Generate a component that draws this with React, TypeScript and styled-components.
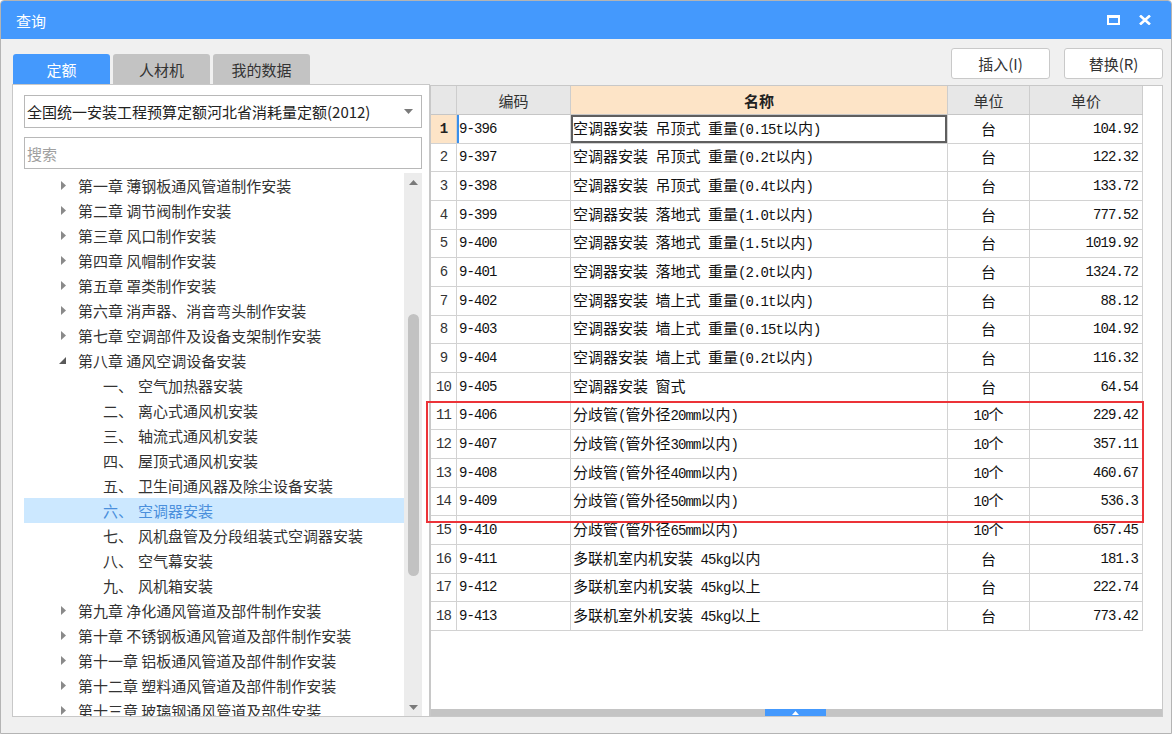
import React from 'react';
import styled, { createGlobalStyle, css } from 'styled-components';

const GlobalStyle = createGlobalStyle`
  body {
    margin: 0;
    background: #ffffff;
    font-family: 'Noto Sans CJK SC', 'Noto Sans', sans-serif;
  }
  * {
    box-sizing: border-box;
  }
`;

const BLUE = '#4499fd';
const PEACH = '#fde4c7';
const GRID = '#d2d2d2';

const Window = styled.div`
  width: 1172px;
  height: 734px;
  background: #f0f0f0;
  border: 1px solid #b4b4b4;
  border-radius: 4px 4px 0 0;
  display: flex;
  flex-direction: column;
  overflow: hidden;
`;

const TitleBar = styled.div`
  height: 38px;
  flex: none;
  background: ${BLUE};
  display: flex;
  align-items: center;
  padding: 0 10px 0 15px;
  color: #fff;
  font-size: 15px;
`;

const Title = styled.div`
  flex: 1;
  line-height: 20px;
  padding-top: 2px;
`;

const TitleButton = styled.div`
  width: 32px;
  height: 24px;
  display: flex;
  align-items: center;
  justify-content: center;
`;

const Body = styled.div`
  flex: 1;
  display: flex;
  flex-direction: column;
  padding: 0 8px 0 11px;
  position: relative;
`;

const TopRow = styled.div`
  height: 46px;
  display: flex;
  align-items: flex-start;
  justify-content: space-between;
`;

const Tabs = styled.div`
  align-self: flex-end;
  display: flex;
  gap: 3px;
  padding-left: 1px;
`;

const Tab = styled.div<{ $active?: boolean }>`
  width: 97px;
  height: 31px;
  border-radius: 3px 3px 0 0;
  display: flex;
  align-items: center;
  justify-content: center;
  font-size: 15px;
  line-height: 20px;
  background: ${(p) => (p.$active ? BLUE : '#c3c3c3')};
  color: ${(p) => (p.$active ? '#ffffff' : '#333333')};
`;

const Buttons = styled.div`
  display: flex;
  gap: 14px;
  padding-top: 9px;
`;

const Button = styled.div`
  width: 99px;
  height: 31px;
  background: #ffffff;
  border: 1px solid #c9c9c9;
  border-radius: 3px;
  display: flex;
  align-items: center;
  justify-content: center;
  font-size: 15px;
  color: #333;
`;

const Main = styled.div`
  display: flex;
  align-items: flex-start;
`;

const LeftPanel = styled.div`
  width: 418px;
  height: 633px;
  margin-top: -1px;
  background: #ffffff;
  border: 1px solid #c8c8c8;
  padding: 10px 7px 0 11px;
  display: flex;
  flex-direction: column;
`;

const Select = styled.div`
  height: 33px;
  border: 1px solid #b8b8b8;
  display: flex;
  align-items: center;
  padding: 0 8px 0 2px;
  font-size: 15px;
  color: #222;
`;

const SelectText = styled.div`
  flex: 1;
  white-space: nowrap;
`;

const SearchBox = styled.div`
  height: 32px;
  margin-top: 9px;
  border: 1px solid #b8b8b8;
  display: flex;
  align-items: center;
  padding-left: 2px;
  font-size: 15px;
  color: #a0a0a0;
`;

const TreeWrap = styled.div`
  flex: 1;
  margin-top: 4px;
  display: flex;
  overflow: hidden;
`;

const TreeList = styled.div`
  flex: 1;
  overflow: hidden;
`;

const TreeRow = styled.div<{ $selected?: boolean }>`
  height: 25px;
  display: flex;
  align-items: center;
  font-size: 15px;
  white-space: nowrap;
  color: ${(p) => (p.$selected ? '#4a8fdc' : '#333333')};
  background: ${(p) => (p.$selected ? '#cce8ff' : 'transparent')};
`;

const Arrow = styled.span`
  width: 54px;
  flex: none;
  display: flex;
  justify-content: flex-end;
  padding-right: 12px;
`;

const SubIndent = styled.span`
  width: 79px;
  flex: none;
`;

const SubLabel = styled.span`
  width: 35px;
  flex: none;
`;

const VScroll = styled.div`
  width: 18px;
  flex: none;
  background: #ececec;
  display: flex;
  flex-direction: column;
  align-items: center;
`;

const ScrollArrow = styled.div`
  height: 18px;
  flex: none;
  display: flex;
  align-items: center;
  justify-content: center;
`;

const ScrollTrack = styled.div`
  flex: 1;
  padding-top: 123px;
`;

const Thumb = styled.div`
  width: 11px;
  height: 262px;
  border-radius: 6px;
  background: #c2c2c2;
`;

const RightPanel = styled.div`
  position: relative;
  width: 733px;
  height: 632px;
  background: #ffffff;
  border: 1px solid #c8c8c8;
  display: flex;
  flex-direction: column;
`;

const Grid = styled.div`
  width: 712px;
`;

const cols = '26px 114px 377px 82px 113px';

const HeadRow = styled.div`
  display: grid;
  grid-template-columns: ${cols};
  height: 29px;
  background: #e7e7e7;
  border-bottom: 1px solid #c6c6c6;
`;

const HeadCell = styled.div<{ $hot?: boolean }>`
  display: flex;
  align-items: center;
  justify-content: center;
  font-size: 15px;
  color: #333;
  border-right: 1px solid #cdcdcd;
  ${(p) =>
    p.$hot &&
    css`
      background: ${PEACH};
      font-weight: bold;
      color: #222;
    `}
`;

const Row = styled.div`
  display: grid;
  grid-template-columns: ${cols};
  height: 28.67px;
  border-bottom: 1px solid ${GRID};
`;

const Cell = styled.div<{ $align?: 'left' | 'center' | 'right'; $focus?: boolean; $mark?: boolean }>`
  display: flex;
  align-items: center;
  justify-content: ${(p) =>
    p.$align === 'right' ? 'flex-end' : p.$align === 'center' ? 'center' : 'flex-start'};
  padding: 0 ${(p) => (p.$align === 'right' ? '4px' : '0')} 0 ${(p) => (p.$align === 'left' ? '2px' : '0')};
  border-right: 1px solid ${GRID};
  font-size: 15px;
  color: #111;
  white-space: pre;
  overflow: hidden;
  ${(p) => p.$focus && css`box-shadow: inset 0 0 0 2px #5f5f5f;`}
  ${(p) => p.$mark && css`box-shadow: inset 2px 0 0 #3b8fea;`}
`;

const CellText = styled.span`
  line-height: 20px;
`;

const NumCell = styled(Cell)<{ $active?: boolean }>`
  justify-content: center;
  font-family: 'Liberation Mono', monospace;
  font-size: 14px;
  letter-spacing: -0.9px;
  color: #333;
  ${(p) =>
    p.$active &&
    css`
      background: ${PEACH};
      font-weight: bold;
      color: #222;
    `}
`;

const Latin = styled.span`
  font-family: 'Liberation Mono', monospace;
  font-size: 14px;
  letter-spacing: -0.9px;
`;

const Filler = styled.div`
  flex: 1;
`;

const HScroll = styled.div`
  height: 7px;
  background: #c4c4c4;
  display: flex;
  padding-left: 334px;
`;

const HThumb = styled.div`
  width: 61px;
  height: 100%;
  background: ${BLUE};
  display: flex;
  align-items: center;
  justify-content: center;
`;

const Highlight = styled.div`
  position: absolute;
  left: -5px;
  top: 315px;
  width: 718px;
  height: 122px;
  border: 2px solid #ec3338;
  pointer-events: none;
`;

const Grip = styled.div`
  position: absolute;
  right: 2px;
  bottom: 2px;
  width: 9px;
  height: 9px;
`;

const chapters1 = [
  '第一章 薄钢板通风管道制作安装',
  '第二章 调节阀制作安装',
  '第三章 风口制作安装',
  '第四章 风帽制作安装',
  '第五章 罩类制作安装',
  '第六章 消声器、消音弯头制作安装',
  '第七章 空调部件及设备支架制作安装',
];

const sections = [
  ['一、', '空气加热器安装'],
  ['二、', '离心式通风机安装'],
  ['三、', '轴流式通风机安装'],
  ['四、', '屋顶式通风机安装'],
  ['五、', '卫生间通风器及除尘设备安装'],
  ['六、', '空调器安装'],
  ['七、', '风机盘管及分段组装式空调器安装'],
  ['八、', '空气幕安装'],
  ['九、', '风机箱安装'],
];

const chapters2 = [
  '第九章 净化通风管道及部件制作安装',
  '第十章 不锈钢板通风管道及部件制作安装',
  '第十一章 铝板通风管道及部件制作安装',
  '第十二章 塑料通风管道及部件制作安装',
  '第十三章 玻璃钢通风管道及部件安装',
];

const rows: Array<[string, string, string, string]> = [
  ['9-396', '空调器安装 吊顶式 重量(0.15t以内)', '台', '104.92'],
  ['9-397', '空调器安装 吊顶式 重量(0.2t以内)', '台', '122.32'],
  ['9-398', '空调器安装 吊顶式 重量(0.4t以内)', '台', '133.72'],
  ['9-399', '空调器安装 落地式 重量(1.0t以内)', '台', '777.52'],
  ['9-400', '空调器安装 落地式 重量(1.5t以内)', '台', '1019.92'],
  ['9-401', '空调器安装 落地式 重量(2.0t以内)', '台', '1324.72'],
  ['9-402', '空调器安装 墙上式 重量(0.1t以内)', '台', '88.12'],
  ['9-403', '空调器安装 墙上式 重量(0.15t以内)', '台', '104.92'],
  ['9-404', '空调器安装 墙上式 重量(0.2t以内)', '台', '116.32'],
  ['9-405', '空调器安装 窗式', '台', '64.54'],
  ['9-406', '分歧管(管外径20mm以内)', '10个', '229.42'],
  ['9-407', '分歧管(管外径30mm以内)', '10个', '357.11'],
  ['9-408', '分歧管(管外径40mm以内)', '10个', '460.67'],
  ['9-409', '分歧管(管外径50mm以内)', '10个', '536.3'],
  ['9-410', '分歧管(管外径65mm以内)', '10个', '657.45'],
  ['9-411', '多联机室内机安装 45kg以内', '台', '181.3'],
  ['9-412', '多联机室内机安装 45kg以上', '台', '222.74'],
  ['9-413', '多联机室外机安装 45kg以上', '台', '773.42'],
];

// half-width runs are drawn in the narrow mono face, like the original grid font
const mixed = (s: string) => (
  <CellText>
    {s
      .split(/([\u0000-\u00ff]+)/)
      .filter(Boolean)
      .map((part, i) =>
        /^[\u0000-\u00ff]+$/.test(part) ? <Latin key={i}>{part}</Latin> : <React.Fragment key={i}>{part}</React.Fragment>
      )}
  </CellText>
);

const Collapsed = () => (
  <svg width="5" height="9" viewBox="0 0 5 9">
    <polygon points="0,0 5,4.5 0,9" fill="#8a8a8a" />
  </svg>
);

const Expanded = () => (
  <svg width="7" height="7" viewBox="0 0 7 7">
    <polygon points="7,0 7,7 0,7" fill="#5a5a5a" />
  </svg>
);

const Caret = ({ up }: { up?: boolean }) => (
  <svg width="9" height="5" viewBox="0 0 9 5">
    <polygon points={up ? '0,5 4.5,0 9,5' : '0,0 9,0 4.5,5'} fill="#7a7a7a" />
  </svg>
);

const App = (): JSX.Element => {
  return (
    <>
      <GlobalStyle />
      <Window>
        <TitleBar>
          <Title>查询</Title>
          <TitleButton>
            <svg width="13" height="10" viewBox="0 0 13 10">
              <rect x="1" y="1.5" width="11" height="7.5" fill="none" stroke="#fff" strokeWidth="2" />
              <rect x="0" y="0" width="13" height="3" fill="#fff" />
            </svg>
          </TitleButton>
          <TitleButton>
            <svg width="12" height="10" viewBox="0 0 12 10">
              <path d="M1 0.5 L11 9.5 M11 0.5 L1 9.5" stroke="#fff" strokeWidth="2.6" />
            </svg>
          </TitleButton>
        </TitleBar>
        <Body>
          <TopRow>
            <Tabs>
              <Tab $active>定额</Tab>
              <Tab>人材机</Tab>
              <Tab>我的数据</Tab>
            </Tabs>
            <Buttons>
              <Button>插入(I)</Button>
              <Button>替换(R)</Button>
            </Buttons>
          </TopRow>
          <Main>
            <LeftPanel>
              <Select>
                <SelectText>全国统一安装工程预算定额河北省消耗量定额(2012)</SelectText>
                <Caret />
              </Select>
              <SearchBox>搜索</SearchBox>
              <TreeWrap>
                <TreeList>
                  {chapters1.map((c) => (
                    <TreeRow key={c}>
                      <Arrow>
                        <Collapsed />
                      </Arrow>
                      {c}
                    </TreeRow>
                  ))}
                  <TreeRow>
                    <Arrow>
                      <Expanded />
                    </Arrow>
                    第八章 通风空调设备安装
                  </TreeRow>
                  {sections.map(([n, t]) => (
                    <TreeRow key={n} $selected={n === '六、'}>
                      <SubIndent />
                      <SubLabel>{n}</SubLabel>
                      {t}
                    </TreeRow>
                  ))}
                  {chapters2.map((c) => (
                    <TreeRow key={c}>
                      <Arrow>
                        <Collapsed />
                      </Arrow>
                      {c}
                    </TreeRow>
                  ))}
                </TreeList>
                <VScroll>
                  <ScrollArrow>
                    <Caret up />
                  </ScrollArrow>
                  <ScrollTrack>
                    <Thumb />
                  </ScrollTrack>
                  <ScrollArrow>
                    <Caret />
                  </ScrollArrow>
                </VScroll>
              </TreeWrap>
            </LeftPanel>
            <RightPanel>
              <Grid>
                <HeadRow>
                  <HeadCell />
                  <HeadCell>编码</HeadCell>
                  <HeadCell $hot>名称</HeadCell>
                  <HeadCell>单位</HeadCell>
                  <HeadCell>单价</HeadCell>
                </HeadRow>
                {rows.map(([code, name, unit, price], i) => (
                  <Row key={code}>
                    <NumCell $active={i === 0}>{i + 1}</NumCell>
                    <Cell $align="left" $mark={i === 0}>
                      <Latin>{code}</Latin>
                    </Cell>
                    <Cell $align="left" $focus={i === 0}>
                      {mixed(name)}
                    </Cell>
                    <Cell $align="center">{mixed(unit)}</Cell>
                    <Cell $align="right">
                      <Latin>{price}</Latin>
                    </Cell>
                  </Row>
                ))}
              </Grid>
              <Filler />
              <HScroll>
                <HThumb>
                  <svg width="7" height="4" viewBox="0 0 7 4">
                    <polygon points="0,4 3.5,0 7,4" fill="#fff" />
                  </svg>
                </HThumb>
              </HScroll>
              <Highlight />
            </RightPanel>
          </Main>
          <Grip>
            <svg width="9" height="9" viewBox="0 0 9 9">
              {[
                [7, 1],
                [4, 4],
                [7, 4],
                [1, 7],
                [4, 7],
                [7, 7],
              ].map(([x, y]) => (
                <rect key={`${x}-${y}`} x={x} y={y} width="1.5" height="1.5" fill="#9a9a9a" />
              ))}
            </svg>
          </Grip>
        </Body>
      </Window>
    </>
  );
};

export default App;
